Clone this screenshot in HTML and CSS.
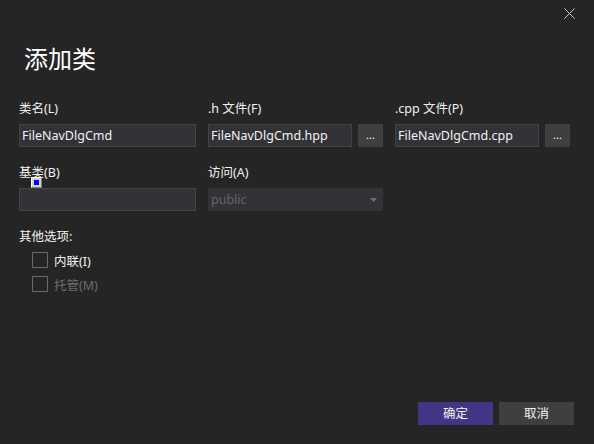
FILE: index.html
```html
<!DOCTYPE html>
<html lang="zh">
<head>
<meta charset="utf-8">
<link rel="stylesheet" href="styles.css">
</head>
<body>
<div class="dialog">
  <div class="topbar">
    <svg class="close" width="11" height="11" viewBox="0 0 11 11"><path d="M0.5 0.5 L10.5 10.5 M10.5 0.5 L0.5 10.5" stroke="#c8c8c8" stroke-width="1" fill="none"/></svg>
  </div>
  <div class="title">添加类</div>
  <div class="grid">
    <div class="field">
      <div class="label">类名(L)</div>
      <div class="input">FileNavDlgCmd</div>
    </div>
    <div class="field">
      <div class="label">.h 文件(F)</div>
      <div class="inrow">
        <div class="input short">FileNavDlgCmd.hpp</div>
        <div class="dots">...</div>
      </div>
    </div>
    <div class="field">
      <div class="label">.cpp 文件(P)</div>
      <div class="inrow">
        <div class="input short">FileNavDlgCmd.cpp</div>
        <div class="dots">...</div>
      </div>
    </div>
    <div class="field base">
      <div class="label">基类(B)</div>
      <div class="input"></div>
      <div class="caret"><div class="caret-in"></div></div>
    </div>
    <div class="field">
      <div class="label">访问(A)</div>
      <div class="input combo"><span class="disabled">public</span><svg width="7" height="4" viewBox="0 0 7 4"><path d="M0 0 H7 L3.5 4 Z" fill="#6e6e6e"/></svg></div>
    </div>
  </div>
  <div class="options">
    <div class="label">其他选项:</div>
    <div class="check"><span class="box"></span><span class="ctext">内联(I)</span></div>
    <div class="check"><span class="box"></span><span class="ctext off">托管(M)</span></div>
  </div>
  <div class="footer">
    <div class="btn primary">确定</div>
    <div class="btn">取消</div>
  </div>
</div>
</body>
</html>
```
FILE: styles.css
```css
html, body {
  margin: 0;
  padding: 0;
  background: #252526;
}
body {
  width: 594px;
  height: 444px;
  overflow: hidden;
  font-family: "Noto Sans", "Noto Sans CJK SC", sans-serif;
  font-size: 12px;
  color: #f1f1f1;
}
.dialog {
  height: 444px;
  box-sizing: border-box;
  padding: 0 20px 19px 19px;
  display: flex;
  flex-direction: column;
}
.topbar {
  height: 42px;
  display: flex;
  justify-content: flex-end;
  align-items: flex-start;
}
.close {
  margin-top: 8px;
  margin-right: -1px;
}
.title {
  font-family: "Noto Sans CJK SC", sans-serif;
  font-size: 24px;
  line-height: 32px;
  padding-left: 5px;
  color: #ffffff;
  margin-bottom: 27px;
}
.grid {
  display: grid;
  grid-template-columns: 177px 175px 175px;
  column-gap: 12px;
  row-gap: 18px;
}
.field {
  display: flex;
  flex-direction: column;
}
.base {
  position: relative;
}
.label {
  font-size: 12.5px;
  line-height: 16px;
  height: 16px;
  margin-bottom: 7px;
  color: #f1f1f1;
}
.inrow {
  display: flex;
  gap: 6px;
}
.input {
  height: 23px;
  box-sizing: border-box;
  border: 1px solid #434346;
  background: #333337;
  color: #f1f1f1;
  font-size: 12.5px;
  line-height: 21px;
  padding-left: 2px;
  white-space: nowrap;
  overflow: hidden;
}
.short {
  width: 144px;
}
.dots {
  width: 25px;
  height: 23px;
  background: #3f3f3f;
  color: #f1f1f1;
  font-size: 11px;
  line-height: 22px;
  text-align: center;
}
.combo {
  display: flex;
  align-items: center;
  justify-content: space-between;
  padding-right: 5px;
  border-color: #333337;
}
.disabled {
  color: #656565;
}
.caret {
  position: absolute;
  left: 12px;
  top: 12px;
  width: 11px;
  height: 11px;
  box-sizing: border-box;
  background: #d4d0c8;
  border: 1px solid #808080;
  border-top-color: #ffffff;
  border-left-color: #ffffff;
  padding: 2px;
}
.caret-in {
  width: 5px;
  height: 5px;
  background: #0000ff;
}
.options {
  margin-top: 18px;
  display: flex;
  flex-direction: column;
}
.options .label {
  margin-bottom: 3px;
}
.check {
  height: 24px;
  display: flex;
  align-items: center;
  padding-left: 13px;
}
.box {
  width: 16px;
  height: 16px;
  box-sizing: border-box;
  border: 1px solid #6a6a6a;
  margin-right: 6px;
}
.ctext {
  font-size: 12.5px;
  color: #f1f1f1;
}
.ctext.off {
  color: #6d6d6d;
}
.footer {
  margin-top: auto;
  display: flex;
  justify-content: flex-end;
  gap: 6px;
}
.btn {
  width: 75px;
  height: 23px;
  background: #3f3f3f;
  color: #f1f1f1;
  font-size: 12.5px;
  line-height: 23px;
  text-align: center;
}
.btn.primary {
  background: #433585;
}
```
